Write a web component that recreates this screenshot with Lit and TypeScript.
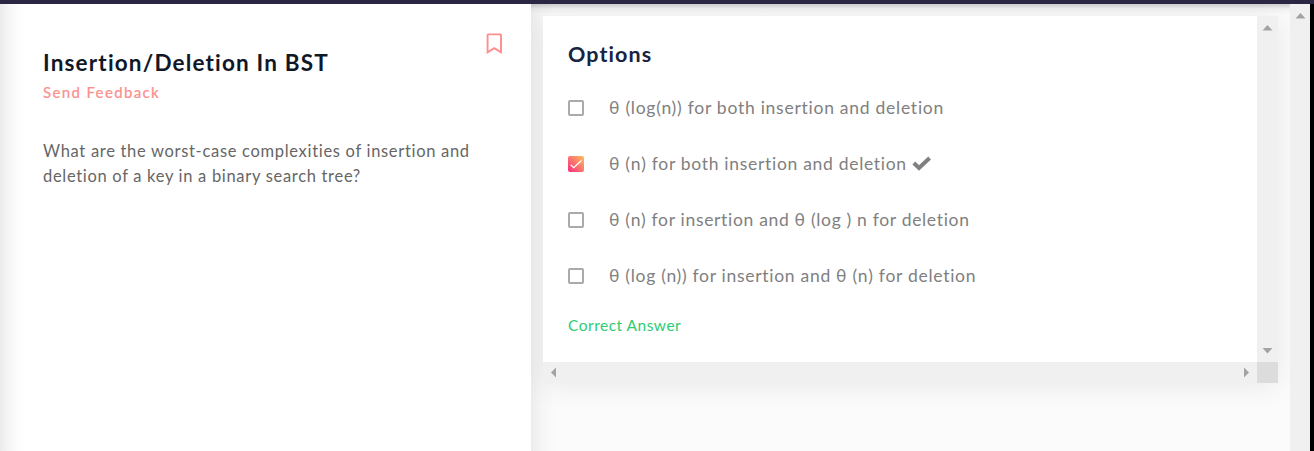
import { LitElement, html, css, svg } from "lit";
import { customElement } from "lit/decorators.js";
import { classMap } from "lit/directives/class-map.js";

const arrow = (points: string) =>
  html`<svg class="arrow" width="21" height="21" viewBox="0 0 21 21">${svg`<polygon points=${points} />`}</svg>`;
const UP = "5.5,14.5 10.5,9 15.5,14.5";
const DOWN = "5.5,7 15.5,7 10.5,12.5";
const LEFT = "8,10.5 13,5.5 13,15.5";
const RIGHT = "8,5.5 8,15.5 13,10.5";

const options = [
  { text: "θ (log(n)) for both insertion and deletion", checked: false, cls: "o1" },
  { text: "θ (n) for both insertion and deletion", checked: true, cls: "o2" },
  { text: "θ (n) for insertion and θ (log ) n for deletion", checked: false, cls: "o3" },
  { text: "θ (log (n)) for insertion and θ (n) for deletion", checked: false, cls: "o4" },
];

@customElement("app-root")
export class AppRoot extends LitElement {
  static styles = css`
    :host { display: flex; flex-direction: column; height: 100vh; overflow: hidden; background: #fff;
      font-family: Lato, "Noto Sans", sans-serif; }
    * { box-sizing: border-box; }
    .topbar { height: 4px; flex: none; background: #2c2645; }
    .main { flex: 1; display: flex; min-height: 0; }
    .problem { width: 531px; flex: none; padding: 44px 27px 0 43px;
      background: linear-gradient(90deg, #ebebeb 0, #f5f5f5 8px, #fcfcfc 17px, #fff 27px); }
    .head { display: flex; justify-content: space-between; align-items: flex-start; }
    h1, h2, p { margin: 0; white-space: nowrap; }
    h1 { font-size: 22.5px; line-height: 30px; font-weight: 700; color: #101828; letter-spacing: 1.17px; }
    .bookmark { margin-top: -15px; display: block; }
    .feedback { font-size: 15px; line-height: 20px; font-weight: 500; color: #fb9290; letter-spacing: 1.35px; margin-top: 4px; -webkit-text-stroke: 0.15px #fb9290; }
    .body { margin-top: 37px; font-size: 16.5px; line-height: 25px; color: #666; letter-spacing: 0.69px; }
    .work { flex: 1; padding: 12px; overflow: hidden;
      background: linear-gradient(rgba(0,0,0,.18), rgba(0,0,0,.04) 5px, transparent 10px),
        linear-gradient(90deg, #ececec 0, #f5f5f5 10px, #fbfbfb 24px, #fbfbfb); }
    .card { display: grid; grid-template: 346px 21px / 1fr 21px; box-shadow: 0 2px 28px rgba(0,0,0,.08); }
    .content { background: #fff; padding: 23px 25px 0; }
    h2 { font-size: 21.5px; line-height: 30px; font-weight: 700; color: #172340; letter-spacing: 1.1px; }
    .list { display: flex; flex-direction: column; margin-top: 11px; }
    .option { height: 56px; display: flex; align-items: center; color: #808080; font-size: 17.5px; white-space: nowrap; }
    .option > span:not(.box) { padding-bottom: 2px; }
    .box { width: 16px; height: 16px; border: 2px solid #aaa; border-radius: 2px; margin-right: 25px; flex: none; }
    .box.on { border: 0; background: linear-gradient(45deg, #f92b7e, #fec05c); }
    .box svg { display: block; }
    .o1 { letter-spacing: 0.74px; }
    .o2 { letter-spacing: 0.7px; }
    .o3 { letter-spacing: 0.68px; }
    .o4 { letter-spacing: 0.71px; }
    .tick { margin-left: 5px; }
    .answer { color: #2ecc71; font-size: 15.5px; line-height: 20px; letter-spacing: 0.5px; margin-top: 11px; }
    .bar { background: #f0f0f0; display: flex; justify-content: space-between; }
    .vertical { flex-direction: column; }
    .corner { background: #dcdcdc; }
    .arrow { display: block; fill: #a3a3a3; flex: none; }
    .page { width: 20px; flex: none; }
    .edge { width: 4px; flex: none; background: #000; }
  `;

  render() {
    return html`
      <div class="topbar"></div>
      <div class="main">
        <section class="problem">
          <div class="head">
            <h1>Insertion/Deletion In BST</h1>
            <svg class="bookmark" width="18" height="22" viewBox="0 0 18 22" fill="none" stroke="#ff8e8e" stroke-width="1.9">
              <path d="M1.6 19.3V2Q1.6 1.4 2.2 1.4H14.4Q15 1.4 15 2V19.3L8.3 15.2Z" />
            </svg>
          </div>
          <p class="feedback">Send Feedback</p>
          <p class="body">What are the worst-case complexities of insertion and<br />deletion of a key in a binary search tree?</p>
        </section>
        <section class="work">
          <div class="card">
            <div class="content">
              <h2>Options</h2>
              <div class="list">
                ${options.map((o) => html`
                  <div class="option">
                    <span class=${classMap({ box: true, on: o.checked })}>
                      ${o.checked ? html`<svg width="16" height="16" viewBox="0 0 16 16" fill="none" stroke="#fff" stroke-width="1.3"><path d="M2.7 8.8 5.7 11.7 13.5 4.5" /></svg>` : null}
                    </span>
                    <span class=${o.cls}>${o.text}</span>
                    ${o.checked ? html`<svg class="tick" width="20" height="16" viewBox="0 0 20 16" fill="none" stroke="#808080" stroke-width="4"><path d="M1.8 7 7 12 17.6 2" /></svg>` : null}
                  </div>`)}
              </div>
              <p class="answer">Correct Answer</p>
            </div>
            <div class="bar vertical">${arrow(UP)}${arrow(DOWN)}</div>
            <div class="bar">${arrow(LEFT)}${arrow(RIGHT)}</div>
            <div class="corner"></div>
          </div>
        </section>
        <div class="bar vertical page">${arrow(UP)}</div>
        <div class="edge"></div>
      </div>
    `;
  }
}
